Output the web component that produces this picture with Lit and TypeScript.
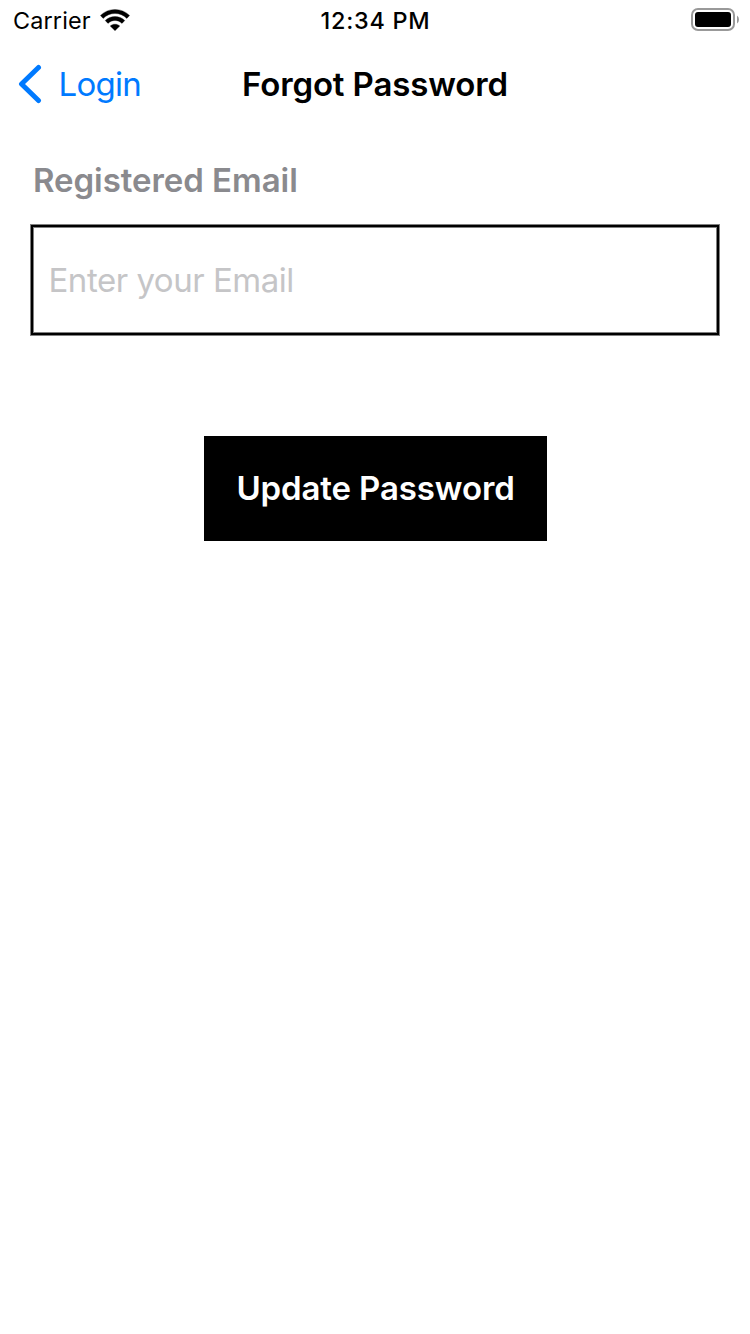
import { LitElement, html, css } from "lit";
import { customElement } from "lit/decorators.js";

@customElement("app-root")
export class AppRoot extends LitElement {
  static styles = css`
    :host {
      display: block;
      height: 1334px;
      background: #fff;
      color: #000;
      font-family: Inter, "Liberation Sans", sans-serif;
      font-size: 33px;
      overflow: hidden;
    }
    * { box-sizing: border-box; }
    svg { display: block; }
    .status, .nav {
      display: grid;
      grid-template-columns: 1fr auto 1fr;
    }
    .status {
      height: 40px;
      padding: 0 11px 0 13px;
      font-size: 23.4px;
      line-height: 42px;
    }
    .carrier { display: flex; letter-spacing: 0.15px; }
    .wifi { margin: 9px 0 0 9.2px; }
    .time { font-weight: 500; letter-spacing: 0.75px; margin-left: -1px; }
    .battery { justify-self: end; margin-top: 8px; }
    .nav {
      height: 88px;
      padding: 0 18px;
      line-height: 88px;
    }
    .back {
      display: flex;
      color: #007aff;
      padding: 0;
      border: 0;
      background: none;
      font: inherit;
      letter-spacing: -0.75px;
    }
    .chevron { margin: 24px 16.5px 0 0; }
    h1 {
      margin: 0;
      font-size: 33px;
      font-weight: 600;
      letter-spacing: -0.13px;
    }
    .form {
      display: flex;
      flex-direction: column;
      padding: 32px 30px 0;
    }
    label {
      padding-left: 3px;
      height: 64px;
      line-height: 40px;
      font-weight: 600;
      color: #8a8a8e;
      letter-spacing: -0.05px;
    }
    input {
      height: 112px;
      width: 100%;
      margin: 0;
      padding: 0 17.5px;
      border: 1px solid #808080;
      border-radius: 0;
      outline: none;
      box-shadow: inset 0 0 0 2px #000, inset 0 0 0 3px #808080;
      background: transparent;
      font: inherit;
      letter-spacing: -0.47px;
    }
    input::placeholder { color: #c5c5c7; opacity: 1; }
    .update {
      align-self: center;
      width: 343px;
      height: 105px;
      margin: 100px 0 0 1px;
      padding: 0 0 2px;
      border: 0;
      background: #000;
      color: #fff;
      font: inherit;
      font-weight: 600;
      letter-spacing: -0.12px;
    }
  `;

  render() {
    return html`
      <div class="status">
        <div class="carrier">
          <span>Carrier</span>
          <svg class="wifi" width="30" height="22" viewBox="0 0 30 22">
            <g stroke="#000" stroke-width="0.3" stroke-linejoin="round">
              <path d="M0.4 6.5C8.5-1.6 21.5-1.6 29.6 6.5L26.8 9.4C20.3 2.9 9.7 2.9 3.2 9.4Z" />
              <path d="M5.2 11.5C10.6 6.1 19.4 6.1 24.8 11.5L22 14.4C18.1 10.5 11.9 10.5 8 14.4Z" />
              <path d="M10.2 17C12.9 14.5 17.1 14.5 19.8 17L15 21.7Z" />
            </g>
          </svg>
        </div>
        <span class="time">12:34 PM</span>
        <svg class="battery" width="48" height="23" viewBox="0 0 48 23">
          <rect x="1" y="1" width="42" height="21" rx="6" fill="none" stroke="#999" stroke-width="2" />
          <rect x="4" y="4" width="36" height="15" rx="3" />
          <path d="M46 7.5Q48 9 48 11.5T46 15.5Z" fill="#999" />
        </svg>
      </div>
      <div class="nav">
        <button class="back">
          <svg class="chevron" width="24" height="40" viewBox="0 0 24 40">
            <path d="M20.5 3.5L3.5 20L20.5 36.5" fill="none" stroke="#007aff" stroke-width="5" stroke-linecap="round" stroke-linejoin="round" />
          </svg>
          <span>Login</span>
        </button>
        <h1>Forgot Password</h1>
      </div>
      <div class="form">
        <label for="email">Registered Email</label>
        <input id="email" type="email" placeholder="Enter your Email" />
        <button class="update">Update Password</button>
      </div>
    `;
  }
}
